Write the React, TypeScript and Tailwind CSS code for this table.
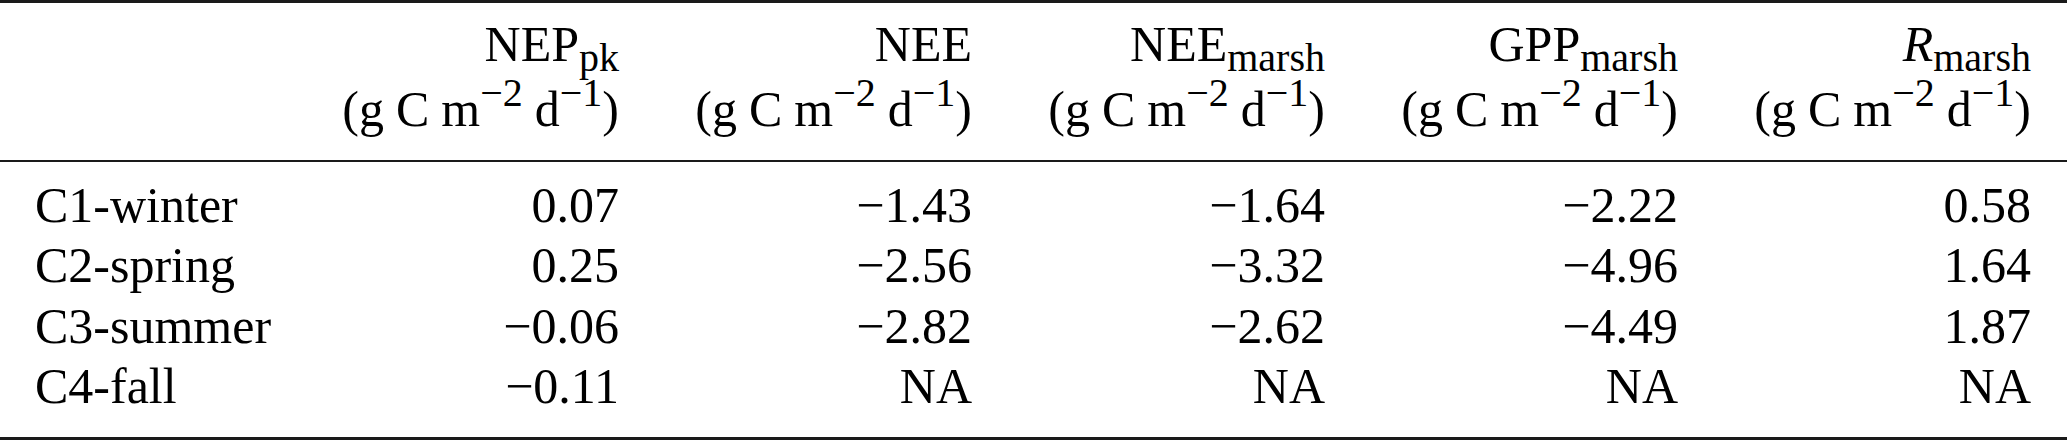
const rows = [
  { label: 'C1-winter', values: ['0.07', '−1.43', '−1.64', '−2.22', '0.58'] },
  { label: 'C2-spring', values: ['0.25', '−2.56', '−3.32', '−4.96', '1.64'] },
  { label: 'C3-summer', values: ['−0.06', '−2.82', '−2.62', '−4.49', '1.87'] },
  { label: 'C4-fall', values: ['−0.11', 'NA', 'NA', 'NA', 'NA'] },
];

const Unit = () => (
  <span className="whitespace-nowrap">
    (g<span className="ml-[12px]">C</span>
    <span className="ml-[12px]">m</span>
    <sup className="text-[40px]">−2</sup>
    <span className="ml-[12px]">d</span>
    <sup className="text-[40px]">−1</sup>)
  </span>
);

const Sub = ({ children }: { children: string }) => <sub className="text-[40px]">{children}</sub>;

const headers = [
  <>
    NEP<Sub>pk</Sub>
  </>,
  <>NEE</>,
  <>
    NEE<Sub>marsh</Sub>
  </>,
  <>
    GPP<Sub>marsh</Sub>
  </>,
  <>
    <i>R</i>
    <Sub>marsh</Sub>
  </>,
];

const App = () => {
  return (
    <div
      className="w-[2067px] h-[440px] bg-white text-black text-[50px] flex flex-col overflow-hidden"
      style={{ fontFamily: '"Liberation Serif", "Times New Roman", serif' }}
    >
      <div className="h-[3px] shrink-0 bg-[#1a1a1a]" />

      <div className="grid grid-cols-[231px_repeat(5,353px)] pl-[35px] pt-[9px] pb-[18px] shrink-0">
        <div />
        {headers.map((h, i) => (
          <div key={i} className="flex flex-col items-end leading-[65px]">
            <span className="whitespace-nowrap">{h}</span>
            <Unit />
          </div>
        ))}
      </div>

      <div className="h-[2px] shrink-0 bg-[#1a1a1a]" />

      <div className="flex flex-col pt-[12.5px] flex-1">
        {rows.map((row) => (
          <div
            key={row.label}
            className="grid grid-cols-[231px_repeat(5,353px)] pl-[35px] leading-[60.5px]"
          >
            <span className="whitespace-nowrap">{row.label}</span>
            {row.values.map((v, i) => (
              <span key={i} className="text-right whitespace-nowrap">
                {v}
              </span>
            ))}
          </div>
        ))}
      </div>

      <div className="h-[3px] shrink-0 bg-[#1a1a1a]" />
    </div>
  );
};

export default App;
